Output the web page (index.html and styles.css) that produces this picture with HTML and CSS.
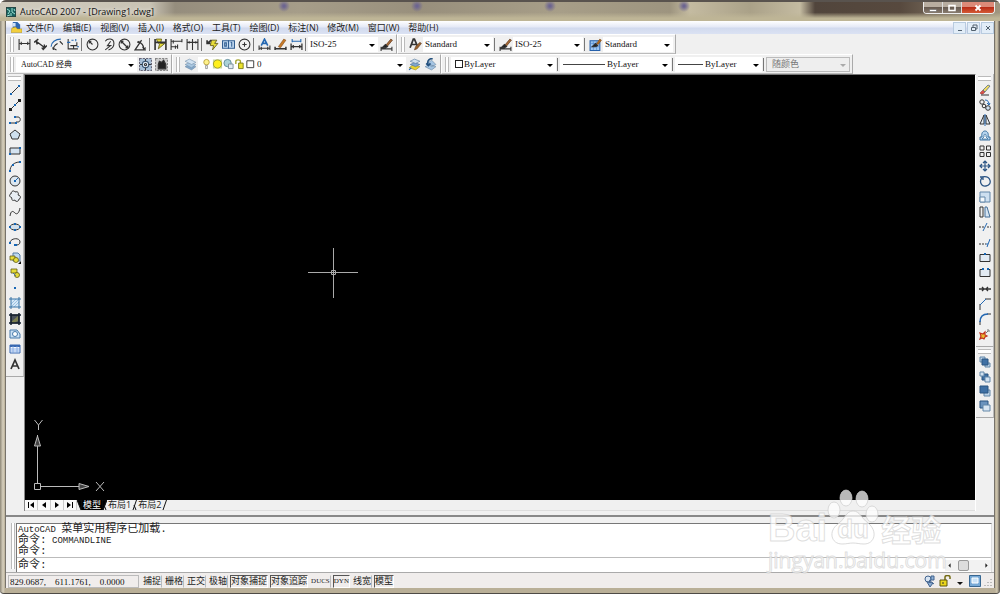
FILE: index.html
```html
<!DOCTYPE html>
<html lang="zh-CN">
<head>
<meta charset="utf-8">
<title>AutoCAD 2007 - [Drawing1.dwg]</title>
<link rel="stylesheet" href="styles.css">
</head>
<body>
<div class="window">
  <header class="titlebar">
    <svg class="app-icon" viewBox="0 0 10 10"><rect width="10" height="10" fill="#18635f"/><path d="M1 2l3 2-2 3M6 1v4l3 2M5 9V6M8 2l1 2M1 9l3-1" stroke="#9fe0d4" fill="none"/></svg>
    <h1>AutoCAD 2007 - [Drawing1.dwg]</h1>
    <div class="caption">
      <button aria-label="最小化"><svg viewBox="0 0 12 10"><path d="M2.500 6.500h7v2h-7z" fill="#fff" stroke="#555" stroke-width=".5"/></svg></button>
      <button aria-label="最大化"><svg viewBox="0 0 12 10"><path d="M3 2.500h6v5H3z" fill="none" stroke="#fff" stroke-width="1.500"/></svg></button>
      <button class="close" aria-label="关闭"><svg viewBox="0 0 12 10"><path d="M3.500 2.500l5 5m0-5l-5 5" stroke="#fff" stroke-width="1.800"/></svg></button>
    </div>
  </header>
  <main class="client">
    <nav class="menubar">
      <svg class="doc-icon" viewBox="0 0 12 12"><path d="M2 0h5l3 3v6H2z" fill="#2f67b0" stroke="none"/><path d="M2 1h3v4H2z" fill="#cfe2f8" stroke="none"/><path d="M0 11.500l1-5 4-1 2 2h5v4z" fill="#f2cf3e" stroke="#a98710" stroke-width=".5"/></svg>
      <button>文件(F)</button><button>编辑(E)</button><button>视图(V)</button><button>插入(I)</button><button>格式(O)</button><button>工具(T)</button><button>绘图(D)</button><button>标注(N)</button><button>修改(M)</button><button>窗口(W)</button><button>帮助(H)</button>
      <div class="mdi">
        <button aria-label="最小化图形"><svg viewBox="0 0 10 10"><path d="M3 7.500h4"/></svg></button>
        <button aria-label="还原图形"><svg viewBox="0 0 10 10"><path d="M4 4V2h4v4H6M2.500 4.500h4v3h-4z"/></svg></button>
        <button aria-label="关闭图形"><svg viewBox="0 0 10 10"><path d="M3 3l4 4m0-4L3 7"/></svg></button>
      </div>
    </nav>

    <div class="row">
      <div class="bar">
        <i class="grip"></i>
        <button aria-label="线性"><svg viewBox="0 0 12 12"><path d="M1 1v10M11 1v10M1 5h10M3 3.500v3M9 3.500v3"/></svg></button>
        <button aria-label="对齐"><svg viewBox="0 0 12 12"><path d="M0 4l4-3M8 11l4-4M2 3l8 6M2 3l1 3M9.500 6l.5 3-3 .5" stroke-width="1.300"/></svg></button>
        <button aria-label="弧长"><svg viewBox="0 0 12 12"><path d="M3 11c0-4 2-5 4-6M9 3l3 3M2 9l4 2"/><path class="b" d="M1 8c0-4 4-7 9-7"/></svg></button>
        <button aria-label="坐标"><svg viewBox="0 0 12 12"><path d="M2 1v9h9M4 7h6V4M7 10V7"/><path class="b" d="M1 4h3M5 2h2M9 1v2M10 8h2"/></svg></button>
        <i class="sep"></i>
        <button aria-label="半径"><svg viewBox="0 0 12 12"><circle cx="6" cy="6" r="5"/><path d="M6 6L3 3M3 5V3h2"/></svg></button>
        <button aria-label="折弯"><svg viewBox="0 0 12 12"><path d="M3 3c2-3 8-3 8 2 0 3-2 5-5 6M8 3L5 7h3l-5 4"/></svg></button>
        <button aria-label="直径"><svg viewBox="0 0 12 12"><circle cx="6" cy="6" r="5"/><path d="M2.500 2.500l7 7M3 5V3h2M9 7v2H7" stroke-width="1.200"/></svg></button>
        <button aria-label="角度"><svg viewBox="0 0 12 12"><path d="M11 11H1l6-9M4 4c3 0 5 3 5 6M3 4l2-1M8 8l1 2 2-1" stroke-width="1.200"/></svg></button>
        <i class="sep"></i>
        <button aria-label="快速标注"><svg viewBox="0 0 12 12"><path class="y" d="M2 1h5L6 5h4l-6 5 1-4z"/><path d="M1 1v10M11 1v10M1 4h10" stroke-width="1.500"/></svg></button>
        <button aria-label="基线"><svg viewBox="0 0 12 12"><path d="M1 1v10M11 1v3M7 6v4M1 3h10M1 8h6M3 2v3M5 7v3"/></svg></button>
        <button aria-label="连续"><svg viewBox="0 0 12 12"><path d="M1 1v10M6 1v10M11 1v10M1 4h10M3 3v2M9 3v2"/></svg></button>
        <i class="sep"></i>
        <button aria-label="快速引线"><svg viewBox="0 0 12 12"><path class="y" d="M5 2h5L8 5h3l-5 6 1-4H4z"/><path d="M1 5l4-3M1 2v3h3" stroke-width="1.500"/></svg></button>
        <button aria-label="公差"><svg viewBox="0 0 12 12"><path d="M.5 2.500h11v7H.5z" fill="#c5dcf3" stroke="#315e91"/><path d="M6 2v8M2.500 4.500h1.500v3H2.500zM9 4v4M8 4h1" stroke="#315e91"/></svg></button>
        <button aria-label="圆心标记"><svg viewBox="0 0 12 12"><circle cx="6" cy="6" r="5"/><path d="M6 4v4M4 6h4"/></svg></button>
        <i class="sep"></i>
        <button aria-label="编辑标注"><svg viewBox="0 0 12 12"><path class="b" d="M3 7l3-6 3 6M4 5h4" stroke-width="1.500"/><path d="M1 7v4M11 7v4M1 9.500h10M3 8v3M9 8v3"/></svg></button>
        <button aria-label="编辑标注文字"><svg viewBox="0 0 12 12"><path d="M4 8l5-7 2 1-5 7z" fill="#c77a28" stroke="#7b4514" stroke-width=".5"/><path d="M1 8v3M11 8v3M1 10h10" stroke-width="1.400"/></svg></button>
        <button aria-label="标注更新"><svg viewBox="0 0 12 12"><path class="b" d="M2 1v3M10 1v3M2 3h8"/><path d="M1 5v6M11 5v6M1 8h10M3 6.500v3M9 6.500v3" stroke-width="1.200"/></svg></button>
        <i class="sep"></i>
        <label class="combo w70"><select aria-label="标注样式"><option>ISO-25</option></select></label>
        <button aria-label="标注样式管理"><svg viewBox="0 0 12 12"><path d="M5 7l5-6 1.500 1-5 6z" fill="#a76a38" stroke="#5a3518" stroke-width=".6"/><path d="M2 9l3-3 2 2-2 1zM1 8v4M11 8v4M1 10h10" fill="#222"/></svg></button>
      </div>
      <div class="bar">
        <i class="grip"></i>
        <button aria-label="文字样式"><svg viewBox="0 0 12 12"><path d="M1 9L4 1h1l3 7M2 6h5" stroke-width="1.600"/><path d="M5 11l1-3 4-4 1.500 1-4 5z" fill="#98612f" stroke="#5b371b" stroke-width=".5"/></svg></button>
        <label class="combo w70"><select aria-label="文字样式"><option>Standard</option></select></label>
        <i class="sep"></i>
        <button aria-label="标注样式"><svg viewBox="0 0 12 12"><path d="M5 7l5-6 1.500 1-5 6z" fill="#a76a38" stroke="#5a3518" stroke-width=".6"/><path d="M2 9l3-3 2 2-2 1zM1 8v4M11 8v4M1 10h10" fill="#222"/></svg></button>
        <label class="combo w70"><select aria-label="标注样式"><option>ISO-25</option></select></label>
        <i class="sep"></i>
        <button aria-label="表格样式"><svg viewBox="0 0 12 12"><path d="M1 2.500h9v9H1z" fill="#9fc7f2" stroke="#2560ab"/><path d="M1 5h9M4 3v8M7 3v8M1 8h9" stroke="#4d86cc" stroke-width=".6"/><path d="M3 8l3-3 2 2-2 1z" fill="#222"/><path d="M7 5l3-4 1.500 1-3 4z" fill="#b36c20" stroke="#7b4514" stroke-width=".5"/></svg></button>
        <label class="combo w70"><select aria-label="表格样式"><option>Standard</option></select></label>
      </div>
    </div>

    <div class="row">
      <div class="bar">
        <i class="grip"></i>
        <label class="combo w121"><select class="cn" aria-label="工作空间"><option>AutoCAD 经典</option></select></label>
        <button aria-label="工作空间设置"><svg viewBox="0 0 12 12"><path d="M.5.5h11v11H.5z" fill="#a9c1d8" stroke="#667" stroke-dasharray="2 1"/><circle cx="6" cy="6" r="3" fill="#dbe5ee" stroke="#34516e"/><circle cx="6" cy="6" r="1"/><path d="M6 1v2M6 9v2M1 6h2M9 6h2"/></svg></button>
        <button aria-label="我的工作空间"><svg viewBox="0 0 12 12"><path d="M.5.5h11v11H.5z" fill="#ccc" stroke="#888" stroke-dasharray="2 1"/><path d="M3 6l1-3 2 1 2-2 2 4v4H3z" fill="#222"/></svg></button>
      </div>
      <div class="bar">
        <i class="grip"></i>
        <button aria-label="图层特性管理器"><svg viewBox="0 0 12 12"><g stroke="#6d8aa6" stroke-width=".5"><path d="M1 8l4-2 6 2-4 3z" fill="#84a9cb"/><path d="M1 6l4-2 6 2-4 3z" fill="#a9c7e0"/><path d="M1 3l4-2 6 3-4 2z" fill="#d1e2f1"/></g></svg></button>
        <label class="combo w207">
          <span class="layer">
            <svg viewBox="0 0 12 12"><circle cx="6" cy="4" r="3" fill="#fff28a" stroke="#a88d2a" stroke-width=".8"/><path d="M5 7.500h2V11H5z" fill="#eee" stroke="#777" stroke-width=".7"/></svg>
            <svg viewBox="0 0 12 12"><path d="M1 1h10v10H1z" fill="#c9d79b" stroke="none"/><circle cx="6" cy="6" r="4.500" fill="#fff01c" stroke="#8c8c20" stroke-width=".8"/></svg>
            <svg viewBox="0 0 12 12"><circle cx="5" cy="5" r="4" fill="#abd1d7" stroke="#5c8898"/><path d="M6 6h5v5H6z" fill="#e2ecf4" stroke="#7a8c9b"/></svg>
            <svg viewBox="0 0 12 12"><path d="M2 6V3c0-2 5-2 5 0v2" stroke="#a3a32c" stroke-width="1.500"/><path d="M5 5h5v6H5z" fill="#ece32c" stroke="#7c7c1c"/></svg>
            <svg viewBox="0 0 12 12"><path d="M2 2.500h7.500V10H2z" fill="#fff"/></svg>
          </span>
          <select aria-label="图层"><option>0</option></select>
        </label>
        <button aria-label="将对象的图层置为当前"><svg viewBox="0 0 12 12"><path d="M1 9l4-3 6 2-4 3z" fill="#e8d22f" stroke="#908020" stroke-width=".5"/><path d="M2 6l4-2 5 2-4 2z" fill="#7fa5cc" stroke="#456b90" stroke-width=".5"/><path d="M2 3l4-2 5 2-4 2z" fill="#cfe0ee" stroke="#456b90" stroke-width=".5"/><path class="b" d="M1 11l2-2"/></svg></button>
        <button aria-label="上一个图层"><svg viewBox="0 0 12 12"><path d="M1 8l4-2 6 2-4 3zM3 5l4-3 4 4-4 2z" fill="#a5c5e3" stroke="#6d8aa6" stroke-width=".6"/><path d="M4 7C2 2 6 0 8 1M2 5l2 2 2-2" stroke="#24517e" stroke-width="1.500"/></svg></button>
      </div>
      <div class="bar">
        <i class="grip"></i>
        <label class="combo w104"><span class="swatch"></span><select aria-label="颜色"><option>ByLayer</option></select></label>
        <i class="sep"></i>
        <label class="combo w111"><span class="line long"></span><select aria-label="线型"><option>ByLayer</option></select></label>
        <i class="sep"></i>
        <label class="combo w86"><span class="line"></span><select aria-label="线宽"><option>ByLayer</option></select></label>
        <i class="sep"></i>
        <label class="combo w83 off"><select class="cn" aria-label="打印样式" disabled><option>随颜色</option></select></label>
      </div>
    </div>

    <div class="work">
      <aside class="side">
        <div class="tools">
          <i class="hgrip"></i>
          <button aria-label="直线"><svg viewBox="0 0 12 12"><path d="M2 10l8-8"/><path class="d" d="M1 9h2v2H1zM9 1h2v2H9z"/></svg></button>
          <button aria-label="构造线"><svg viewBox="0 0 12 12"><path d="M1 11L11 1"/><path d="M0 9h3v3H0zM9 0h3v3H9z" fill="#222" stroke="none"/><path class="d" d="M5 5h2v2H5z"/></svg></button>
          <button aria-label="多段线"><svg viewBox="0 0 12 12"><path d="M1 9h6M6 3h3c3 0 3 5 0 5H7"/><path class="d" d="M0 8h2v2H0zM6 8h2v2H6zM5 2h2v2H5z"/></svg></button>
          <button aria-label="正多边形"><svg viewBox="0 0 12 12"><path d="M6 1l5 4-2 5H3L1 5z" fill="#cfe0ee"/></svg></button>
          <button aria-label="矩形"><svg viewBox="0 0 12 12"><path d="M1 3h10v6H1z" fill="#d4e3f1"/><path class="d" d="M0 8h2v2H0zM10 2h2v2h-2z"/></svg></button>
          <button aria-label="圆弧"><svg viewBox="0 0 12 12"><path d="M1 11c0-5 4-9 10-9"/><path class="d" d="M0 10h2v2H0zM3 4h2v2H3zM10 1h2v2h-2z"/></svg></button>
          <button aria-label="圆"><svg viewBox="0 0 12 12"><circle cx="6" cy="6" r="5" fill="#dce7f0"/><path class="b" d="M6 6l3-3"/><path class="d" d="M5 5h2v2H5z"/></svg></button>
          <button aria-label="修订云线"><svg viewBox="0 0 12 12"><path d="M3 8C0 7 0 4 2 4c0-3 3-4 4-2 3-1 4 1 3 3 3 0 3 4 1 4 0 3-4 3-4 1-2 1-4 0-3-2z" fill="#e8eef4"/></svg></button>
          <button aria-label="样条曲线"><svg viewBox="0 0 12 12"><path d="M1 10c1-6 3-5 5-3s4 0 5-5"/></svg></button>
          <button aria-label="椭圆"><svg viewBox="0 0 12 12"><ellipse cx="6" cy="6" rx="5" ry="3" fill="#d2e0ec"/><path class="d" d="M0 5h2v2H0zM10 5h2v2h-2zM5 2h2v2H5zM5 8h2v2H5z"/></svg></button>
          <button aria-label="椭圆弧"><svg viewBox="0 0 12 12"><path d="M1 7c0-5 10-6 10-1 0 3-3 3-4 3"/><path class="d" d="M0 6h2v2H0zM5 8h3v2H5z"/></svg></button>
          <button aria-label="插入块"><svg viewBox="0 0 12 12"><path d="M4 1h5l2 2v6H4z" fill="#bed8ef" stroke="#547da4"/><path class="y" d="M1 4h5v4H1z"/><circle class="y" cx="7" cy="8" r="2.500"/><path d="M9 12h3V9z" fill="#111" stroke="none"/></svg></button>
          <button aria-label="创建块"><svg viewBox="0 0 12 12"><path class="y" d="M2 2h6v4H2z"/><circle class="y" cx="8" cy="8" r="2.500"/><path d="M4 6l3 3" stroke="#4a749f"/></svg></button>
          <button aria-label="点"><svg viewBox="0 0 12 12"><path class="d" d="M5 5h2v2H5z"/></svg></button>
          <button aria-label="图案填充"><svg viewBox="0 0 12 12"><path d="M2 2h8v8H2z" fill="#d6e8f7" stroke="none"/><path d="M2 7l5-5M2 10l8-8M5 10l5-5" stroke="#7fb0d8" stroke-width=".7"/><path d="M0 2h12M0 10h12M2 0v12M10 0v12" stroke="#3974a7"/></svg></button>
          <button aria-label="渐变色"><svg viewBox="0 0 12 12"><path d="M2 2h8v8H2z" fill="#48505c"/><path d="M2 9l7-6v5l-4 2" fill="#7d8050" stroke="none"/><path d="M0 2h12M0 10h12M2 0v12M10 0v12" stroke="#15202f" stroke-width="1.500"/></svg></button>
          <button aria-label="面域"><svg viewBox="0 0 12 12"><path d="M1 2h7l3 4v4H1z" fill="#cae0f4" stroke="#487aaa"/><circle cx="6" cy="6" r="2.500" fill="#fff" stroke="#487aaa"/></svg></button>
          <button aria-label="表格"><svg viewBox="0 0 12 12"><path d="M1 2h10v8H1z" fill="#f4f8ff" stroke="#3767b0"/><path d="M1 3h10" stroke="#3767b0" stroke-width="2"/><path d="M1 6h10M1 8h10M4 3v7M8 3v7" stroke="#79a2df" stroke-width=".8"/></svg></button>
          <button aria-label="多行文字"><svg viewBox="0 0 12 12"><path d="M2 11l4-9 4 9M3.500 8h5" stroke-width="1.700"/></svg></button>
        </div>
      </aside>

      <section class="drawing">
        <div class="canvas">
          <svg class="cross" viewBox="0 0 50 50"><path d="M25.500 0v50M0 24.500h50M23.500 22.500h4v4h-4z"/></svg>
          <svg class="ucs" viewBox="0 0 76 76"><path d="M8.500 66V18M12 69.500h48M5.500 66.500h6v6h-6z"/><path d="M8.500 19l-3 10h6zM60 69.500l-10-3v6z" fill="#444"/><path d="M5.500 3l4 5 4-5M9.500 8v5M67 65l8 9m0-9l-8 9"/></svg>
        </div>
        <div class="tabs">
          <button class="nav" aria-label="第一个"><svg viewBox="0 0 8 8"><path d="M1 1h1v6H1zM7 1v6L3 4z"/></svg></button>
          <button class="nav" aria-label="上一个"><svg viewBox="0 0 8 8"><path d="M6 1v6L2 4z"/></svg></button>
          <button class="nav" aria-label="下一个"><svg viewBox="0 0 8 8"><path d="M2 1v6l4-3z"/></svg></button>
          <button class="nav" aria-label="最后一个"><svg viewBox="0 0 8 8"><path d="M1 1v6l4-3zM6 1h1v6H6z"/></svg></button>
          <svg class="slant on" viewBox="0 0 5 10"><path d="M0 0h5v10H4z"/></svg>
          <button class="tab active">模型</button>
          <svg class="slant" viewBox="0 0 5 10"><path class="fillb" d="M0 0h5L1 10H0z"/><path d="M4.500 0L1 10M2 5l2 5"/></svg>
          <button class="tab">布局1</button>
          <svg class="slant" viewBox="0 0 5 10"><path d="M4.500 0L1 10M2 5l2 5"/></svg>
          <button class="tab">布局2</button>
          <svg class="slant" viewBox="0 0 5 10"><path d="M4.500 0L1 10"/></svg>
        </div>
      </section>

      <aside class="side right">
        <div class="tools modify">
          <i class="hgrip"></i>
          <button aria-label="删除"><svg viewBox="0 0 12 12"><path d="M1 9l3-3 2 2-2 2H2z" fill="#d9534a" stroke="#833" stroke-width=".5"/><path d="M4 6l5-5 2 1-5 6z" fill="#f2dc62" stroke="#475d7c" stroke-width=".7"/><path d="M2 11h8"/></svg></button>
          <button aria-label="复制"><svg viewBox="0 0 12 12"><circle cx="3" cy="3" r="2.200"/><circle cx="5" cy="7" r="1.800"/><circle cx="9" cy="9" r="2.300" fill="#d2e1ef"/><path class="b" d="M6 1c3 0 4 2 4 5M8 4l2 2 1-2"/></svg></button>
          <button aria-label="镜像"><svg viewBox="0 0 12 12"><path d="M5 1v9H1zM7 1v9h4z" fill="#e6edf3"/><path class="b" d="M6 0v12"/></svg></button>
          <button aria-label="偏移"><svg viewBox="0 0 12 12"><path d="M1 10V7h2c-2-8 8-8 6 0h2v3z" fill="#b7d5ef" stroke="#3a719f"/><path d="M3 9h6L7 7V5c0-1-2-1-2 0v2z" fill="#fff" stroke="#3a719f" stroke-width=".8"/></svg></button>
          <button aria-label="阵列"><svg viewBox="0 0 12 12"><path d="M1 1h4v4H1zM7.500 1h4v4h-4zM1 7.500h4v4H1zM7.500 7.500h4v4h-4z"/></svg></button>
          <button aria-label="移动"><svg viewBox="0 0 12 12"><path d="M6 1v10M1 6h10M4 3l2-2 2 2M4 9l2 2 2-2M3 4L1 6l2 2M9 4l2 2-2 2" stroke="#2d5685" stroke-width="1.200"/></svg></button>
          <button aria-label="旋转"><svg viewBox="0 0 12 12"><path d="M3 2c9-2 11 8 4 9-5 1-7-5-4-8M1 2h3v3" stroke="#2d5685" stroke-width="1.300"/></svg></button>
          <button aria-label="缩放"><svg viewBox="0 0 12 12"><path d="M1 1h10v10H1z" fill="#cddff0" stroke="#6286a8"/><path d="M1 6h5v5H1z" fill="#f4f8fb" stroke="#6286a8"/></svg></button>
          <button aria-label="拉伸"><svg viewBox="0 0 12 12"><path d="M1 1h3v10H1z"/><path d="M6 1h2l3 10H6z" fill="#d5e4f2" stroke="#446f99"/></svg></button>
          <button aria-label="修剪"><svg viewBox="0 0 12 12"><path d="M0 6h5M8 6h4" stroke-dasharray="2 1"/><path class="b" d="M4 10l4-8"/></svg></button>
          <button aria-label="延伸"><svg viewBox="0 0 12 12"><path d="M0 7h7" stroke-dasharray="2 1"/><path class="b" d="M7 7h2M8 10l3-8"/></svg></button>
          <button aria-label="打断于点"><svg viewBox="0 0 12 12"><path d="M1 2.500h10v7H1z" fill="#e2eaf2"/><path class="d" d="M5 1h2v2H5z"/></svg></button>
          <button aria-label="打断"><svg viewBox="0 0 12 12"><path d="M3 2.500H1v7h10v-7H9" fill="#e2eaf2"/><path class="d" d="M3 1h2v2H3zM8 1h2v2H8z"/></svg></button>
          <button aria-label="合并"><svg viewBox="0 0 12 12"><path d="M0 6h12M3 4l2 2-2 2M9 4L7 6l2 2" stroke-width="1.300"/></svg></button>
          <button aria-label="倒角"><svg viewBox="0 0 12 12"><path d="M1 12V6M6 1h6"/><path class="b" d="M1 7l6-6"/></svg></button>
          <button aria-label="圆角"><svg viewBox="0 0 12 12"><path d="M1 12V8M8 1h4"/><path class="b" d="M1 9c0-5 3-8 8-8" stroke-width="1.500"/></svg></button>
          <button aria-label="分解"><svg viewBox="0 0 12 12"><path d="M1 5l3 1 2-2v3l2 1-2 1-1 2-2-1-2 1 1-3z" fill="#e9bd30" stroke="#c0321f" stroke-width="1.200"/><path d="M7 5l2-2M9 1v2h2" stroke="#777"/></svg></button>
        </div>
        <div class="tools order">
          <i class="hgrip"></i>
          <button aria-label="前置"><svg viewBox="0 0 12 12"><path d="M1 1h5v5H1zM6 7h5v4H6z" fill="#bcd3e8" stroke="#6387a8"/><path d="M3 3h6v6H3z" fill="#3f70a4" stroke="#2a5480"/></svg></button>
          <button aria-label="后置"><svg viewBox="0 0 12 12"><path d="M3 3h6v6H3z" fill="#3f70a4" stroke="#2a5480"/><path d="M1 1h4v4H1zM6 6h5v5H6z" fill="#d2e2f1" stroke="#6387a8"/></svg></button>
          <button aria-label="置于对象之上"><svg viewBox="0 0 12 12"><path d="M5 5h6v6H5z" fill="#bcd3e8" stroke="#6387a8"/><path d="M1 1h8v7H1z" fill="#3f70a4" stroke="#2a5480"/></svg></button>
          <button aria-label="置于对象之下"><svg viewBox="0 0 12 12"><path d="M1 1h8v7H1z" fill="#6b93bd" stroke="#2a5480"/><path d="M4 5h7v6H4z" fill="#d9e6f2" stroke="#6387a8"/></svg></button>
        </div>
      </aside>
    </div>

    <section class="command">
      <i class="grip"></i>
      <div class="console">
        <div class="history">
          <p>AutoCAD <span>菜单实用程序已加载.</span></p>
          <p><span>命令:</span> COMMANDLINE</p>
          <p><span>命令:</span></p>
        </div>
        <div class="prompt">
          <label for="cmd">命令:</label><input id="cmd" type="text">
          <div class="scroll">
            <button aria-label="向左"><svg viewBox="0 0 8 8"><path d="M5 2v4L3 4z"/></svg></button>
            <i class="thumb"></i>
            <button aria-label="向右"><svg viewBox="0 0 8 8"><path d="M3 2v4l2-2z"/></svg></button>
          </div>
        </div>
      </div>
    </section>

    <footer class="status">
      <output class="coords"><span>829.0687,</span><span>611.1761,</span><span>0.0000</span></output>
      <div class="modes">
        <button>捕捉</button><button>栅格</button><button>正交</button><button>极轴</button><button class="on">对象捕捉</button><button class="on">对象追踪</button><button class="lat">DUCS</button><button class="on lat">DYN</button><button>线宽</button><button class="on">模型</button>
      </div>
      <div class="tray">
        <svg viewBox="0 0 12 12"><circle cx="4" cy="4" r="3" fill="#d7e4f3" stroke="#41628d"/><path d="M7 1h3v4H7zM3 7l6 1-3 4zM5 5l5 4" fill="#8fb0d6" stroke="#41628d"/></svg>
        <svg viewBox="0 0 12 12"><path d="M6 5V2c0-2 5-2 5 0v2" stroke="#736a12" stroke-width="1.500"/><path d="M1 5h7v6H1z" fill="#ead61c" stroke="#5c540c"/><path d="M4 7v2"/></svg>
        <svg class="down" viewBox="0 0 12 12"><path d="M3 7h6L6 10z" fill="#111" stroke="none"/></svg>
        <button aria-label="全屏显示"><svg viewBox="0 0 12 12"><path d="M.5.5h11v11H.5z" fill="#77a9d6" stroke="#386791"/><path d="M3 3h6v5H3z" fill="#c9e2f7" stroke="#fff"/></svg></button>
        <svg class="size" viewBox="0 0 8 12"><path d="M7 4v1M7 7v1M4 7v1M7 10v1M4 10v1M1 10v1" stroke="#aaa" stroke-width="1.500"/></svg>
      </div>
    </footer>
  </main>
  <div class="watermark">
    <div class="brand"><span>Bai</span>
      <div class="paw"><svg viewBox="0 0 52 56"><g fill="#fff" fill-opacity=".72" stroke="#ccc" stroke-opacity=".7"><ellipse cx="7" cy="21" rx="6" ry="8"/><ellipse cx="19" cy="9" rx="6" ry="8"/><ellipse cx="35" cy="10" rx="6" ry="8"/><ellipse cx="45" cy="25" rx="6" ry="8"/><path d="M26 22c7 0 8 7 15 12 10 8 7 21-4 21-5 0-7-1-11-1s-6 1-11 1C4 55 1 42 11 35c7-5 8-13 15-13z"/></g></svg><b>du</b></div>
      <span class="jy">经验</span></div>
    <div class="site">jingyan.baidu.com</div>
  </div>
</div>
</body>
</html>
```
FILE: styles.css
```css
* { box-sizing: border-box; }
body { margin: 0; font: 9px/12px "Open Sans", "Noto Sans CJK SC", sans-serif; color: #222; }
button { margin: 0; padding: 0; border: 0; background: none; font: inherit; color: inherit; display: flex; align-items: center; justify-content: center; flex: none; white-space: nowrap; }
svg { display: block; fill: none; stroke: #333; flex: none; }
p { margin: 0; }
.b { stroke: #2468b2; }
.d { fill: #1766b4; stroke: none; }
.y { fill: #e6dc39; stroke: #615c16; stroke-width: 0.8px; }

.window {
  position: relative; height: 100vh; display: flex; flex-direction: column; padding: 0 5px 5px;
  background: linear-gradient(90deg, #8e8878 0, #d8d1bf 3px, #b9af97 5px, #b9af97 calc(100% - 5px), #d2c9b2 calc(100% - 3px), #55504a 100%);
  border-bottom: 1px solid #4d4a45; border-radius: 6px 6px 4px 4px; overflow: hidden;
}
.titlebar {
  height: 21px; flex: none; margin: 0 -5px; padding-left: 6px; display: flex; align-items: center; gap: 4px;
  border-top: 2px solid #59534e;
  background:
    radial-gradient(circle at 284px 4px, #6d6590 1px, transparent 6px),
    radial-gradient(circle at 417px 4px, #6d6590 1px, transparent 6px),
    radial-gradient(circle at 550px 4px, #6d6590 1px, transparent 6px),
    radial-gradient(circle at 684px 4px, #6d6590 1px, transparent 6px),
    linear-gradient(180deg, transparent 55%, #beb596 85%),
    linear-gradient(90deg, #d0cbbe 0, #c9c3b4 150px, #958d7d 175px, #a69d89 300px, #988f7c 420px, #a79e88 560px, #9d947f 670px, #c4bba1 690px, #aaa188 750px, #c4bba1 800px, #51453c 815px, #57493e 900px, #a09680 100%);
}
.titlebar h1 { flex: 1; margin: 0; font-size: 9px; font-weight: 400; color: #111; text-shadow: 0 0 4px #fff; }
.app-icon { width: 10px; height: 10px; }
.caption { display: flex; align-self: flex-start; margin-right: 5px; border: 1px solid #eee; border-top: 0; border-radius: 0 0 4px 4px; overflow: hidden; }
.caption button { width: 19px; height: 11px; background: linear-gradient(#b8ada0 45%, #685c52 50%, #887b6e); border-right: 1px solid #ddd; }
.caption .close { width: 32px; border: 0; background: linear-gradient(#dc8a78 45%, #b92d18 50%, #d45a35); }
.caption svg { width: 12px; height: 10px; }

.client { flex: 1; min-height: 0; display: flex; flex-direction: column; background: #f0f0f0; border: 1px solid #77736b; border-width: 0 1px; }
.menubar { height: 13px; flex: none; display: flex; align-items: center; padding-left: 5px; background: linear-gradient(#fff, #e5e9f6 45%, #d2daee 55%, #dbe2f3); }
.menubar > button { margin-right: 9px; line-height: 13px; }
.doc-icon { width: 11px; height: 11px; margin-right: 4px; }
.mdi { display: flex; gap: 1px; margin-left: auto; }
.mdi button { width: 13px; height: 12px; background: #e2edf8; border: 1px solid #b8cbdf; }
.mdi svg { width: 10px; height: 10px; stroke: #52616e; }

.row { height: 20px; flex: none; display: flex; }
.bar { display: flex; align-items: center; height: 20px; padding: 0 2px 0 3px; border: 1px solid #fff; border-right-color: #aaa; border-bottom-color: #bbb; }
.grip { width: 4px; height: 15px; flex: none; margin-right: 2px; border: 1px solid #bbb; border-width: 0 1px; background: #fff; }
.bar button { width: 16px; height: 16px; }
.bar svg { width: 13px; height: 13px; }
.sep { width: 1px; height: 13px; flex: none; margin: 0 2px 0 1px; background: #777; }
.combo { display: flex; align-items: center; height: 15px; padding-left: 3px; background: #fff; position: relative; }
.combo::after { content: ""; position: absolute; right: 3px; top: 7px; border: 3px solid transparent; border-top-color: #000; border-bottom: 0; }
.combo select { flex: 1; min-width: 0; height: 15px; padding: 0; border: 0; appearance: none; background: none; font: 9px/15px "Liberation Serif", "Noto Sans CJK SC", serif; color: #111; }
.combo .cn { font-size: 8px; padding-left: 2px; }
.combo.w70 { width: 70px; padding-left: 2px; }
.w86 { width: 87px; }
.w83 { width: 84px; }
.w104 { width: 105px; }
.w111 { width: 111px; }
.w121 { width: 121px; }
.w207 { width: 208px; }
.off { background: #eee; border: 1px solid #bbb; }
.off .cn { color: #777; font-size: 9px; opacity: 1; }
.off::after { border-top-color: #aaa; top: 6px; }
.layer { display: flex; margin-right: 1px; }
.bar .layer svg { width: 11px; height: 12px; }
.swatch { width: 8px; height: 8px; margin: 0 1px 0 1px; border: 1px solid #222; }
.line { width: 25px; height: 1px; margin-right: 2px; background: #444; }
.long { width: 42px; }

.work { flex: 1; min-height: 0; display: flex; }
.side { width: 18px; flex: none; }
.tools { display: flex; flex-direction: column; height: 303px; padding-bottom: 4px; border-right: 1px solid #bbb; border-bottom: 1px solid #aaa; }
.hgrip { height: 5px; flex: none; margin: 2px 2px 1px; border: 1px solid #bbb; border-width: 1px 0; background: #fff; }
.tools button { flex: 1; min-height: 0; }
.tools svg { width: 12px; height: 12px; }
.right { width: 18px; }
.modify { height: 273px; }
.order { height: 71px; }
.drawing { flex: 1; min-width: 0; display: flex; flex-direction: column; border-left: 1px solid #888; border-top: 1px solid #777; border-right: 1px solid #fff; margin-bottom: 4px; }
.canvas { flex: 1; position: relative; background: #000; }
.cross { position: absolute; left: 283px; top: 173px; width: 50px; height: 50px; stroke: #aaa; }
.ucs { position: absolute; left: 4px; bottom: 7px; width: 76px; height: 76px; stroke: #bbb; }
.tabs { height: 11px; flex: none; display: flex; align-items: flex-start; border-bottom: 1px solid #ddd; }
.tabs .nav { width: 13px; height: 10px; background: #fafafa; border-right: 1px solid #ccc; }
.nav svg { width: 8px; height: 8px; fill: #000; stroke: none; }
.slant { width: 5px; height: 10px; stroke: #111; }
.on.slant, .fillb { fill: #000; }
.tab { height: 10px; font-size: 9px; line-height: 10px; padding: 0 1px; }
.tabs .active { background: #000; color: #fff; }

.command { height: 57px; flex: none; display: flex; padding: 6px 2px 0 5px; border-top: 2px solid #888; }
.command .grip { height: 46px; margin-right: 1px; }
.console { flex: 1; display: flex; flex-direction: column; background: #fff; border: 1px solid #777; border-right-color: #ddd; border-bottom: 0; font: 9px/11px "Liberation Mono", "Noto Sans CJK SC", monospace; color: #222; }
.history { height: 34px; padding-left: 1px; border-bottom: 1px solid #bbb; }
.history p { height: 11px; white-space: pre; }
.history span, .prompt label { font-size: 11px; line-height: 11px; }
.prompt { flex: 1; display: flex; align-items: center; padding-left: 1px; }
.prompt input { flex: 1; min-width: 0; height: 12px; border: 0; padding: 0 4px; outline: 0; background: none; font: inherit; }
.scroll { width: 46px; display: flex; align-items: center; justify-content: space-between; background: #f2f2f2; }
.scroll svg { width: 9px; height: 9px; fill: #222; stroke: none; }
.thumb { width: 11px; height: 11px; margin-right: 10px; background: #ddd; border: 1px solid #999; border-radius: 2px; }

.status { height: 16px; flex: none; display: flex; align-items: center; padding: 1px 2px 0; border-top: 1px solid #aaa; background: #f0edec; font-size: 9px; }
.coords { display: flex; gap: 9px; width: 131px; height: 13px; padding-left: 1px; border: 1px solid #bbb; font: 9px/12px "Liberation Serif", serif; color: #111; }
.modes { display: flex; gap: 2px; margin-left: 3px; }
.modes button { height: 13px; padding: 0; border: 1px solid transparent; border-right-color: #bbb; }
.modes .on { border-color: #555 #fff #fff #555; }
.modes .lat { font: 7px/12px "Liberation Serif", serif; }
.tray { display: flex; align-items: center; margin-left: auto; gap: 3px; }
.tray svg { width: 12px; height: 12px; }
.tray .size { width: 8px; }

.watermark { position: absolute; left: 768px; top: 488px; white-space: nowrap; color: rgba(255,255,255,0.75); -webkit-text-stroke: 1px rgba(205,205,205,0.65); pointer-events: none; }
.brand { display: flex; align-items: flex-end; height: 57px; font: 700 38px/34px "Liberation Sans", sans-serif; }
.paw { position: relative; width: 52px; height: 56px; flex: none; }
.paw svg { width: 52px; height: 56px; }
.paw b { position: absolute; left: 10px; bottom: 2px; font: 700 26px/28px "Liberation Sans", sans-serif; }
.jy { margin-left: 2px; font: 700 30px/34px "Noto Sans CJK SC", sans-serif; }
.site { font: 21px/30px "Open Sans", sans-serif; }
```
